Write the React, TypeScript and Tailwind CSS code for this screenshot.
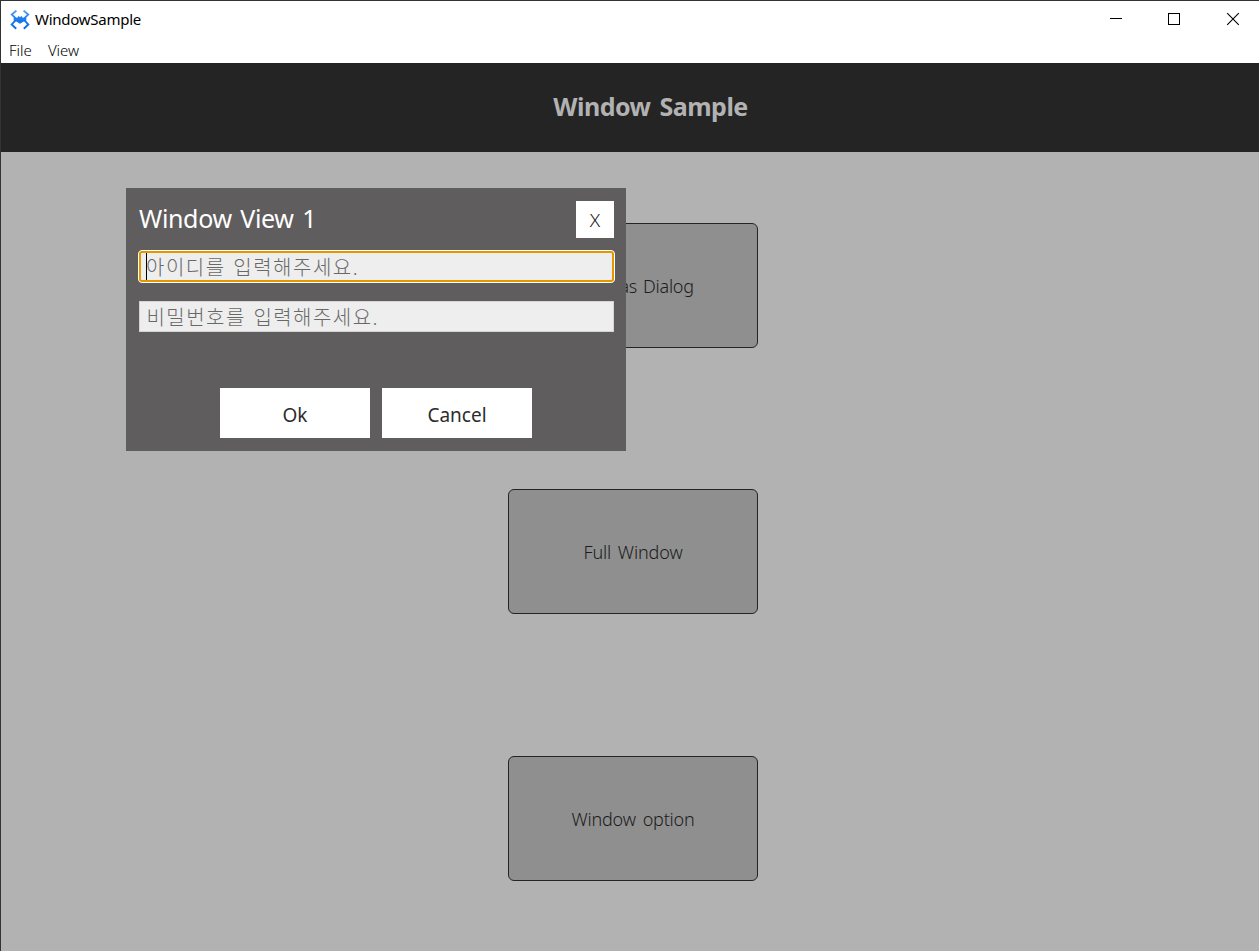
import React from "react";

const cards = [
  { label: "Open as Dialog", style: "mb-[141px] pr-[3px] tracking-[-0.25px] [word-spacing:1.5px]" },
  { label: "Full Window", style: "mb-[142px] tracking-[-0.1px] [word-spacing:2px]" },
  { label: "Window option", style: "tracking-[-0.2px] [word-spacing:2.5px]" },
];

function Logo() {
  return (
    <svg width="20" height="20" viewBox="0 0 20 20" fill="none" className="shrink-0">
      <defs>
        <linearGradient id="logo" x1="0" y1="0" x2="0" y2="20" gradientUnits="userSpaceOnUse">
          <stop stopColor="#55a5f5" />
          <stop offset=".5" stopColor="#1878ec" />
          <stop offset="1" stopColor="#1068e8" />
        </linearGradient>
      </defs>
      <g stroke="url(#logo)" strokeWidth="1.9">
        <path d="M6.4.6 1.8 4.6 5.8 8.4M13.6.6l4.6 4L14.2 8.4M6.2 18.8 1.7 14.4 5.6 10.4M13.8 18.8l4.5-4.4-3.9-4" />
      </g>
      <path d="M3.8 7.2 7.2 7.8 8.4 6 10 6.9 11.6 6l1.2 1.8 3.4-.6.2 3.4-3.2 1.2L10 13.8l-3.2-2-3.2-1.2z" fill="url(#logo)" />
    </svg>
  );
}

function TitleBar() {
  return (
    <div className="flex h-[37px] items-center justify-between bg-white pr-px pl-[9px] text-black">
      <div className="flex items-center gap-[5px]">
        <Logo />
        <span className="mb-[2px] whitespace-nowrap text-[15px] leading-5 tracking-[-0.26px]">WindowSample</span>
      </div>
      <div className="flex">
        <svg width="58" height="37" viewBox="0 0 58 37" stroke="#000" shapeRendering="crispEdges">
          <path d="M23 17.5h12" />
        </svg>
        <svg width="58" height="37" viewBox="0 0 58 37" stroke="#000" fill="none" shapeRendering="crispEdges">
          <path d="M23.5 12.5h11v11h-11z" />
        </svg>
        <svg width="55" height="37" viewBox="0 0 55 37" stroke="#000" strokeWidth="1.1">
          <path d="m24.2 12.2 11.6 11.6m0-11.6L24.2 23.8" />
        </svg>
      </div>
    </div>
  );
}

function Dialog() {
  return (
    <div className="absolute top-[187px] left-[125px] flex h-[263px] w-[500px] flex-col bg-[#5f5d5e] pt-[13px] pr-[12px] pl-[13px]">
      <div className="flex h-[37px] justify-between">
        <h2 className="whitespace-nowrap text-[25px] leading-[35px] tracking-[-0.35px] text-white [word-spacing:2.5px]">Window View 1</h2>
        <button className="h-[37px] w-[38px] bg-white pt-[2px] text-[19px] font-light text-[#222]">X</button>
      </div>
      <div className="-mx-px mt-3 flex h-[33px] items-center rounded-[4px] border border-white bg-white">
        <div className="flex h-[31px] flex-1 items-center rounded-[3px] border-2 border-[#e59700] bg-[#eee] pl-[5px]">
          <span className="h-[27px] w-px bg-black" />
          <span className="-ml-px pt-[2px] whitespace-nowrap text-[20px] leading-[27px] font-light tracking-[1.5px] text-[#686868] [word-spacing:1px]">아이디를 입력해주세요.</span>
        </div>
      </div>
      <div className="mt-[18px] flex h-[31px] items-center border border-[#d4d4d4] bg-[#eee] pl-[6.5px]">
        <span className="pt-[2px] whitespace-nowrap text-[20px] leading-[27px] font-light tracking-[1.45px] text-[#686868] [word-spacing:1px]">비밀번호를 입력해주세요.</span>
      </div>
      <div className="mt-[56px] flex justify-center gap-3 pr-px">
        <button className="h-[50px] w-[150px] bg-white pt-1 text-[19px] text-[#2c2c2c]">Ok</button>
        <button className="h-[50px] w-[150px] bg-white pt-1 text-[19px] text-[#2c2c2c]">Cancel</button>
      </div>
    </div>
  );
}

export default function App() {
  return (
    <div className="relative flex h-[951px] w-[1259px] flex-col overflow-hidden border-t border-l border-[#333] bg-[#b2b2b2] font-['Noto_Sans','Noto_Sans_CJK_KR',sans-serif]">
      <TitleBar />
      <nav className="flex h-[25px] gap-[16px] bg-white pl-2 text-[15px] leading-[24px] font-light text-black">
        <span>File</span>
        <span>View</span>
      </nav>
      <header className="flex h-[89px] justify-center bg-[#242424] pt-[25px] pl-[41px] text-[#b2b2b2]">
        <h1 className="whitespace-nowrap text-[25px] leading-9 font-bold tracking-[-0.5px] [word-spacing:3px]">Window Sample</h1>
      </header>
      <main className="flex flex-col items-center pt-[71px] pl-[6px]">
        {cards.map((card) => (
          <button
            key={card.label}
            className={`h-[125px] w-[250px] shrink-0 rounded-[6px] border border-[#242424] bg-[#8f8f8f] pt-[2px] text-[18px] font-light whitespace-nowrap text-[#1c1c1c] ${card.style}`}
          >
            {card.label}
          </button>
        ))}
      </main>
      <Dialog />
    </div>
  );
}
